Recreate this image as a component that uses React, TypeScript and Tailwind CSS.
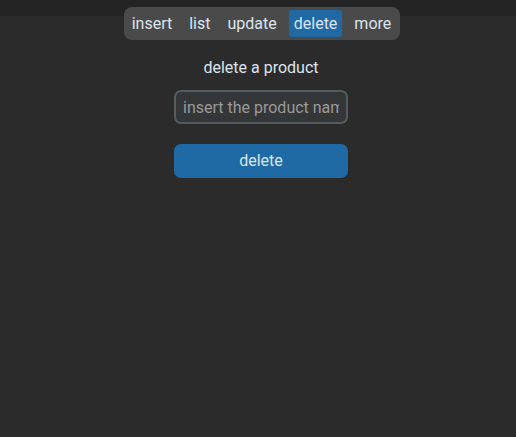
import { useState } from "react";

const TABS = ["insert", "list", "update", "delete", "more"];

const App = () => {
  const [active, setActive] = useState("delete");
  const [name, setName] = useState("");

  return (
    <div
      className="min-h-[437px] w-full pl-[6px] bg-[linear-gradient(#242424_0_16px,#2b2b2b_16px)] text-[#dce4ee] text-[16px] flex flex-col items-center"
      style={{ fontFamily: "Roboto, 'Liberation Sans', sans-serif" }}
    >
      {/* tab bar */}
      <div className="mt-[7px] ml-[2px] flex gap-[7px] rounded-[8px] bg-[#4a4a4a] p-[3px] pr-[4px]">
        {TABS.map((tab) => (
          <button
            key={tab}
            onClick={() => setActive(tab)}
            className={
              tab === active
                ? "h-[27px] rounded-[3px] bg-[#1f6aa5] px-[5px] leading-[27px] text-[#dce4ee]"
                : "h-[27px] rounded-[3px] px-[5px] leading-[27px] text-[#dce4ee]"
            }
          >
            {tab}
          </button>
        ))}
      </div>

      <p className="mt-[18px] leading-[20px]">delete a product</p>

      <input
        value={name}
        onChange={(e) => setName(e.target.value)}
        placeholder="insert the product name"
        className="mt-[12px] h-[34px] w-[174px] rounded-[7px] border-2 border-[#565b5e] bg-[#343638] px-[7px] text-[16px] text-[#dce4ee] placeholder:text-[#9a9a9a] outline-none"
      />

      <button className="mt-[20px] h-[34px] w-[174px] rounded-[7px] bg-[#1f6aa5] text-[16px] text-[#dce4ee]">
        delete
      </button>
    </div>
  );
};

export default App;
